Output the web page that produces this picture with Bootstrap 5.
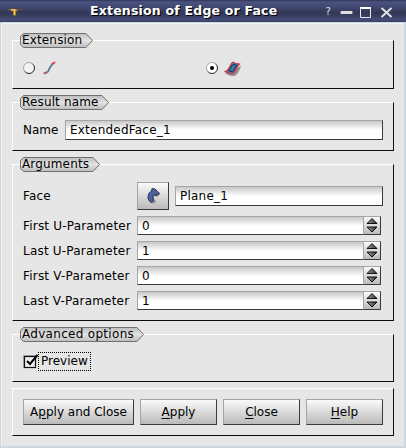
<!DOCTYPE html>
<html lang="en">
<head>
<meta charset="utf-8">
<title>Extension of Edge or Face</title>
<link rel="stylesheet" href="https://cdn.jsdelivr.net/npm/bootstrap@5.3.0/dist/css/bootstrap.min.css">
<style>
body{font:12px/14px "DejaVu Sans",sans-serif;color:#000;background:#e6e6e6;overflow:hidden}
.dialog-window{width:406px;height:448px;background:#e6e6e6}
.title-strip{height:22px;background:linear-gradient(#30365a 0,#4a527f 2px,#414871 7px,#333955 12px,#343957 14px,#434b76 19px,#454c73 21px,#31385c 22px);color:#fff}
.title-text{font-weight:700;font-size:12.5px;letter-spacing:.2px;line-height:22px;text-shadow:1px 1px 0 #000;white-space:nowrap}
.content-area{height:426px;border:solid #cbd7e1;border-width:1px 2px 2px 1px;box-shadow:inset 1px 1px #f0f5f8,inset -1px -1px #e2eaf0;padding:17px 10px 0 11px}
.bevel{border:1px solid;border-color:#fff #0c0c10 #0c0c10 #fff;width:382px;height:49px}
.g-name{margin-top:13px}
.g-args{margin-top:13px;height:157px}
.g-adv{margin-top:13px;height:48px}
.g-btn{margin-top:6px;height:48px;padding:10px 10px 0;gap:6px}
.tag{height:15px;margin:-8px 0 0 7px;line-height:14px;padding-left:2px;white-space:nowrap;letter-spacing:.15px}
.tag span{z-index:1;position:relative}
.tag-wide{letter-spacing:.3px}
.inset{height:20px;border:1px solid;border-color:#a5a5a5 #3a3a3a #3a3a3a #a5a5a5;background:linear-gradient(#c8c8c8,#fff 9px);font-size:12px;line-height:19px;padding:0 0 0 4px;color:#000;white-space:nowrap;letter-spacing:.22px}
.raised{border:1px solid;border-color:#a5a5a5 #3a3a3a #3a3a3a #a5a5a5;background:linear-gradient(#fafafa,#bababa);border-radius:0;padding:0;font-size:12px;line-height:23px;color:#000}
.raised u{text-underline-offset:2px}
.param{height:19px;margin-bottom:6px}
.param label,.face label{width:114px;line-height:20px;white-space:nowrap;letter-spacing:.2px}
.param .inset{height:19px;width:226px;border-right-width:0}
.spin{width:18px;height:19px}
.face{height:28px;margin-top:10px}
.pick{width:32px;height:28px}
.face .inset{width:208px}
.opt-row{margin-top:12px;padding-left:10px;height:17px}
.opt-row svg,.spin svg,.pick svg{display:block}
.opt-half{width:183px}
.focus-label{width:53px;height:19px;border:1px dotted #000;line-height:16px;padding-left:2px}
</style>
<script src="https://cdn.jsdelivr.net/npm/bootstrap@5.3.0/dist/js/bootstrap.bundle.min.js"></script>
</head>
<body>
<div class="dialog-window">
 <header class="title-strip d-flex align-items-center position-relative">
  <svg width="90" height="22" class="flex-shrink-0"><path d="M8 9.500L13 8.500l3 1 3-.5-2 2-1 .5v4h-3v-4z" fill="#a67d29"/><path d="M11 10h5M14.500 9v6" stroke="#ffd16a"/><path d="M18 9.500h5" stroke="#6b5130"/></svg>
  <span class="title-text">Extension of Edge or Face</span>
  <svg width="86" height="22" class="position-absolute top-0 end-0" fill="none"><text x="5.500" y="15" font-size="10" fill="#dfe2ee">?</text><rect x="20.500" y="11" width="12" height="3" rx="1" fill="#dedfe5"/><path d="M40.500 8v9.500h10V8" stroke="#e8e9ee"/><path d="M40 8h11" stroke="#fff" stroke-width="2"/><path d="M61.500 8l10 9M71.500 8l-10 9" stroke="#e0e1e7" stroke-width="2"/></svg>
 </header>
 <main class="content-area">
  <section class="bevel g-ext">
   <div class="tag position-relative" style="width:73px"><svg class="position-absolute top-0 start-0" width="73" height="15"><path d="M3.500 .5H66L72.500 7.500 66 14.500H3.500L.5 11.500v-8z" fill="url(#tg)" stroke="#707070"/></svg><span>Extension</span></div>
   <div class="opt-row d-flex">
    <div class="opt-half d-flex"><svg width="40" height="17"><circle cx="6" cy="8" r="5.500" fill="#f3f3f3" stroke="url(#rg)"/><path d="M21 13.500c4-.5 4-2 5.500-5s2.500-5 5.500-6" fill="none" stroke="#657d99" stroke-width="1.900"/><path d="M20.500 13c2 0 3-.7 3.700-1.500M28.500 4c1-.8 2-1.200 3.800-1.800" fill="none" stroke="#e45555" stroke-width="1.600"/></svg></div>
    <svg width="40" height="18"><circle cx="6" cy="8" r="5.500" fill="#fff" stroke="url(#rg)"/><circle cx="6" cy="8" r="2" fill="#000"/><path d="M19 13.500l6 2.500h4l3-3 2-4 1-3z" fill="#807b7b" opacity=".8"/><path d="M18.500 11.500c3-.3 4-2.500 5.200-5S25.500 2 27 2l2.500 1.200L33.500 4c-1.800 1.500-2.700 4-3.700 6s-2 3.700-3.800 3.800c-2.500 0-5-1.300-7.500-2.300z" fill="#4777aa" stroke="#d6393e" stroke-width="1.100"/><path d="M22.500 10.500c2-1.200 2.700-4.500 4.500-6l4 .8c-2 2-2.500 4.700-4.500 6.500z" fill="#4777aa" stroke="#172d4d"/></svg>
   </div>
  </section>
  <section class="bevel g-name">
   <div class="tag position-relative" style="width:89px"><svg class="position-absolute top-0 start-0" width="89" height="15"><path d="M3.500 .5H82L88.500 7.500 82 14.500H3.500L.5 11.500v-8z" fill="url(#tg)" stroke="#707070"/></svg><span>Result name</span></div>
   <div class="d-flex" style="padding:10px 0 0 10px"><label style="width:42px;line-height:20px">Name</label><div class="inset" style="width:318px">ExtendedFace_1</div></div>
  </section>
  <section class="bevel g-args">
   <div class="tag position-relative" style="width:80px"><svg class="position-absolute top-0 start-0" width="80" height="15"><path d="M3.500 .5H73L79.500 7.500 73 14.500H3.500L.5 11.500v-8z" fill="url(#tg)" stroke="#707070"/></svg><span>Arguments</span></div>
   <div style="padding-left:10px">
    <div class="face d-flex align-items-center" style="margin-bottom:6px"><label>Face</label><button class="raised pick" aria-label="Select face"><svg width="30" height="26"><path d="M13.500 20c-3-2-4-5-3-8 .8-3 3-4 5-4.500V6l1-.5 5 4.500-3.500 3-1.500-2c-1.500 1-2 3-1 5l2 2z" transform="translate(1 1)" fill="#999"/><path d="M13 19.500c-2.500-1.700-3.500-4.500-2.800-7C10.800 10 12.500 8.300 13.500 8L14 5.500l3 .5 4.500 4.500-4 2.500-.7-1.800c-2 1-2.500 2.800-1.500 4.800l.7 1.500z" fill="#4b63a0" stroke="#161d32" stroke-width=".8"/></svg></button><div class="inset" style="margin-left:6px">Plane_1</div></div>
    <div class="param d-flex"><label>First U-Parameter</label><div class="inset">0</div><div class="raised spin"><svg width="16" height="17"><use href="#ud"/></svg></div></div>
    <div class="param d-flex"><label>Last U-Parameter</label><div class="inset">1</div><div class="raised spin"><svg width="16" height="17"><use href="#ud"/></svg></div></div>
    <div class="param d-flex"><label>First V-Parameter</label><div class="inset">0</div><div class="raised spin"><svg width="16" height="17"><use href="#ud"/></svg></div></div>
    <div class="param d-flex"><label>Last V-Parameter</label><div class="inset">1</div><div class="raised spin"><svg width="16" height="17"><use href="#ud"/></svg></div></div>
   </div>
  </section>
  <section class="bevel g-adv">
   <div class="tag tag-wide position-relative" style="width:124px"><svg class="position-absolute top-0 start-0" width="124" height="15"><path d="M3.500 .5H117L123.500 7.500 117 14.500H3.500L.5 11.500v-8z" fill="url(#tg)" stroke="#707070"/></svg><span>Advanced options</span></div>
   <div class="d-flex" style="padding:10px 0 0 10px"><svg width="15" height="19" overflow="visible"><rect x="1.500" y="4.500" width="11" height="11" fill="#eee" stroke="#111" stroke-width="1.200"/><path d="M.5 16V3.500H13" fill="none" stroke="#999"/><path d="M4 9l3 3 7.500-9" fill="none" stroke="#000" stroke-width="2"/></svg><span class="focus-label">Preview</span></div>
  </section>
  <section class="bevel g-btn d-flex">
   <button class="raised" style="width:111px;height:26px">A<u>p</u>ply and Close</button>
   <button class="raised" style="width:77px;height:26px"><u>A</u>pply</button>
   <button class="raised" style="width:77px;height:26px"><u>C</u>lose</button>
   <button class="raised" style="width:77px;height:26px"><u>H</u>elp</button>
  </section>
 </main>
</div>
<svg width="0" height="0" class="position-absolute"><defs>
 <linearGradient id="tg" x2="0" y2="1"><stop stop-color="#bdbdbd"/><stop offset=".5" stop-color="#e2e2e2"/><stop offset="1" stop-color="#bcbcbc"/></linearGradient>
 <linearGradient id="rg" x2="1" y2="1"><stop offset=".35" stop-color="#aaa"/><stop offset=".6" stop-color="#222"/></linearGradient>
 <linearGradient id="ag"><stop stop-color="#999"/><stop offset="1" stop-color="#333"/></linearGradient>
 <g id="ud"><path d="M3 6.500L8 1.500l5 5zM3 10l5 5 5-5z" fill="url(#ag)" stroke="#000" stroke-width=".9"/></g>
</defs></svg>
</body>
</html>
